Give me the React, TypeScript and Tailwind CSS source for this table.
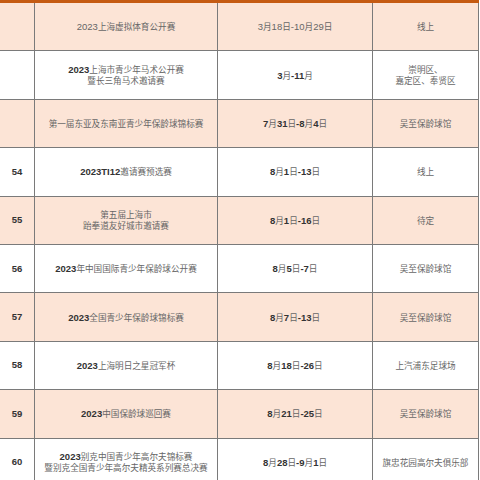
import React from 'react'

type Row = {
  no: string
  name: string[]
  date: string
  place: string[]
  pink: boolean
  plain?: boolean
}

const rows: Row[] = [
  { no: '', name: ['2023上海虚拟体育公开赛'], date: '3月18日-10月29日', place: ['线上'], pink: true, plain: true },
  { no: '', name: ['2023上海市青少年马术公开赛', '暨长三角马术邀请赛'], date: '3月-11月', place: ['崇明区、', '嘉定区、奉贤区'], pink: false },
  { no: '', name: ['第一届东亚及东南亚青少年保龄球锦标赛'], date: '7月31日-8月4日', place: ['吴至保龄球馆'], pink: true },
  { no: '54', name: ['2023TI12邀请赛预选赛'], date: '8月1日-13日', place: ['线上'], pink: false },
  { no: '55', name: ['第五届上海市', '跆拳道友好城市邀请赛'], date: '8月1日-16日', place: ['待定'], pink: true },
  { no: '56', name: ['2023年中国国际青少年保龄球公开赛'], date: '8月5日-7日', place: ['吴至保龄球馆'], pink: false },
  { no: '57', name: ['2023全国青少年保龄球锦标赛'], date: '8月7日-13日', place: ['吴至保龄球馆'], pink: true },
  { no: '58', name: ['2023上海明日之星冠军杯'], date: '8月18日-26日', place: ['上汽浦东足球场'], pink: false },
  { no: '59', name: ['2023中国保龄球巡回赛'], date: '8月21日-25日', place: ['吴至保龄球馆'], pink: true },
  { no: '60', name: ['2023别克中国青少年高尔夫锦标赛', '暨别克全国青少年高尔夫精英系列赛总决赛'], date: '8月28日-9月1日', place: ['旗忠花园高尔夫俱乐部'], pink: false },
]

// split into latin/digit runs (bold sans) and CJK runs (light gray)
function Mixed({ text, plain }: { text: string; plain?: boolean }) {
  const parts = text.match(/[A-Za-z0-9\-]+|[^A-Za-z0-9\-]+/g) || []
  return (
    <>
      {parts.map((p, i) =>
        /^[A-Za-z0-9\-]+$/.test(p) ? (
          <span
            key={i}
            className={
              plain
                ? "font-['Liberation_Sans',sans-serif] text-[#666] text-[9.5px]"
                : "font-['Liberation_Sans',sans-serif] font-bold text-[#333] text-[9.5px]"
            }
          >
            {p}
          </span>
        ) : (
          <span key={i} className="text-[#666]">
            {p}
          </span>
        )
      )}
    </>
  )
}

function Cell({ lines, plain, className }: { lines: string[]; plain?: boolean; className?: string }) {
  return (
    <div className={'flex flex-col items-center justify-center text-center leading-[11px] ' + (className || '')}>
      {lines.map((l, i) => (
        <div key={i} className="whitespace-nowrap">
          <Mixed text={l} plain={plain} />
        </div>
      ))}
    </div>
  )
}

export default function App() {
  return (
    <div className="w-[480px] h-[480px] overflow-hidden bg-white font-['Noto_Sans_CJK_SC',sans-serif] text-[8.6px]">
      <div className="w-[479px] h-[3px] bg-[#c55a11]" />
      <div className="w-[479px] flex flex-col">
        {rows.map((r, i) => (
          <div
            key={i}
            className={
              'grid grid-cols-[35px_183px_155px_1fr] h-[48.4px] border-b border-[#7a7a7a] shrink-0 ' +
              (r.pink ? 'bg-[#fce4d6]' : 'bg-white')
            }
          >
            <div className="flex items-center justify-center border-r border-[#7a7a7a] font-['Liberation_Sans',sans-serif] font-bold text-[9.5px] text-[#333]">
              {r.no}
            </div>
            <Cell lines={r.name} plain={r.plain} className="border-r border-[#7a7a7a]" />
            <Cell lines={[r.date]} plain={r.plain} className="border-r border-[#7a7a7a]" />
            <Cell lines={r.place} className="border-r border-[#7a7a7a]" />
          </div>
        ))}
      </div>
    </div>
  )
}
